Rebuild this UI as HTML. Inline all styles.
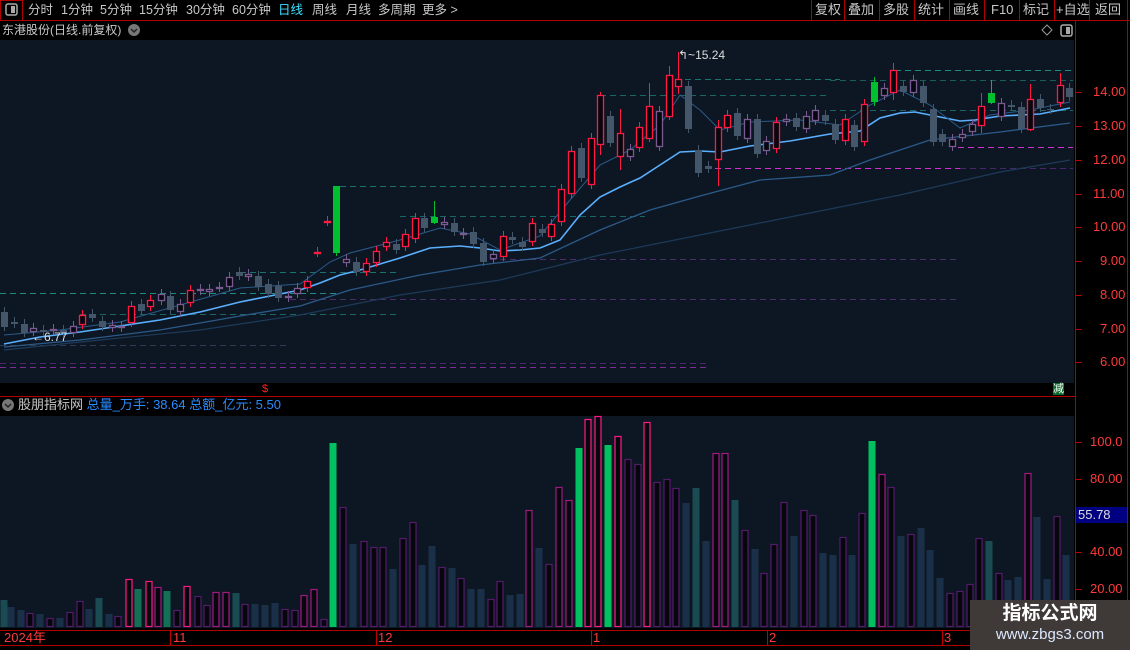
<!DOCTYPE html>
<html><head><meta charset="utf-8">
<style>
*{margin:0;padding:0;box-sizing:border-box}
body{width:1130px;height:650px;background:#000;overflow:hidden;position:relative;font-family:"Liberation Sans","Noto Sans CJK SC",sans-serif;color:#c8c8c8}
.t{position:absolute;white-space:nowrap;font-size:13px;line-height:16px}
.ax{position:absolute;color:#ff3a3a;font-size:13px;font-family:"Liberation Sans",sans-serif;line-height:14px}
</style></head><body>
<svg id="s" width="1130" height="650" style="position:absolute;left:0;top:0">
<rect x="0" y="40" width="1074" height="343" fill="#0d1724"/>
<rect x="0" y="416" width="1074" height="212" fill="#0d1724"/>
<line x1="0" y1="20.5" x2="1130" y2="20.5" stroke="#b00000"/>
<rect x="0.5" y="0.5" width="22" height="20" fill="none" stroke="#b00000"/>
<rect x="6" y="4" width="11" height="11" rx="2" fill="none" stroke="#aaa" stroke-width="1.5"/><rect x="11" y="6" width="4" height="7" fill="#aaa"/>
<g stroke="#b00000"><line x1="811.5" y1="0" x2="811.5" y2="20"/><line x1="844.5" y1="0" x2="844.5" y2="20"/><line x1="879.5" y1="0" x2="879.5" y2="20"/><line x1="914.5" y1="0" x2="914.5" y2="20"/><line x1="949.5" y1="0" x2="949.5" y2="20"/><line x1="984.5" y1="0" x2="984.5" y2="20"/><line x1="1019.5" y1="0" x2="1019.5" y2="20"/><line x1="1054.5" y1="0" x2="1054.5" y2="20"/><line x1="1089.5" y1="0" x2="1089.5" y2="20"/><line x1="1127.5" y1="0" x2="1127.5" y2="650"/>
<line x1="1075.5" y1="21" x2="1075.5" y2="650"/>
<line x1="0" y1="396.5" x2="1075" y2="396.5"/>
<line x1="0" y1="630.5" x2="1075" y2="630.5"/>
<line x1="0" y1="645.5" x2="1075" y2="645.5"/></g>
<circle cx="134" cy="30" r="6" fill="#777"/><path d="M131 29l3 3 3-3" stroke="#222" fill="none" stroke-width="1.5"/>
<circle cx="8" cy="405" r="6" fill="#777"/><path d="M5 404l3 3 3-3" stroke="#222" fill="none" stroke-width="1.5"/>
<path d="M1047 25l5 5-5 5-5-5z" fill="none" stroke="#999"/>
<rect x="1061" y="25" width="11" height="11" rx="2" fill="none" stroke="#aaa" stroke-width="1.5"/><rect x="1066" y="27" width="4" height="7" fill="#aaa"/>
<g id="g"></g>
</svg>
<div class="t" style="left:28px;top:2px;font-size:12.5px">分时</div>
<div class="t" style="left:61px;top:2px;font-size:12.5px">1分钟</div>
<div class="t" style="left:100px;top:2px;font-size:12.5px">5分钟</div>
<div class="t" style="left:139px;top:2px;font-size:12.5px">15分钟</div>
<div class="t" style="left:186px;top:2px;font-size:12.5px">30分钟</div>
<div class="t" style="left:232px;top:2px;font-size:12.5px">60分钟</div>
<div class="t" style="left:278px;top:2px;color:#3ce0ff;font-size:12.5px">日线</div>
<div class="t" style="left:312px;top:2px;font-size:12.5px">周线</div>
<div class="t" style="left:346px;top:2px;font-size:12.5px">月线</div>
<div class="t" style="left:378px;top:2px;font-size:12.5px">多周期</div>
<div class="t" style="left:422px;top:2px;font-size:12.5px">更多 &gt;</div>
<div class="t" style="left:815px;top:2px">复权</div>
<div class="t" style="left:848px;top:2px">叠加</div>
<div class="t" style="left:883px;top:2px">多股</div>
<div class="t" style="left:918px;top:2px">统计</div>
<div class="t" style="left:953px;top:2px">画线</div>
<div class="t" style="left:991px;top:2px">F10</div>
<div class="t" style="left:1023px;top:2px">标记</div>
<div class="t" style="left:1056px;top:2px">+自选</div>
<div class="t" style="left:1095px;top:2px">返回</div>
<div class="t" style="left:2px;top:22px;font-size:12px">东港股份(日线.前复权)</div>
<div class="t" style="left:18px;top:397px">股朋指标网 <span style="color:#2a8cff">总量_万手: 38.64 总额_亿元: 5.50</span></div>
<div class="t" style="left:32px;top:329px;font-size:12px;color:#ddd">&larr;6.77</div>
<div class="t" style="left:678px;top:47px;font-size:12px;color:#ddd">&#8624;~15.24</div>
<div class="t" style="left:262px;top:383px;color:#ff2020;font-size:11px;line-height:12px">$</div>
<div class="t" style="left:1053px;top:383px;background:#0a6a2a;color:#fff;font-size:11px;line-height:12px">减</div>
<div class="ax" style="left:1093px;top:85px">14.00</div>
<div class="ax" style="left:1093px;top:119px">13.00</div>
<div class="ax" style="left:1093px;top:153px">12.00</div>
<div class="ax" style="left:1093px;top:187px">11.00</div>
<div class="ax" style="left:1093px;top:220px">10.00</div>
<div class="ax" style="left:1100px;top:254px">9.00</div>
<div class="ax" style="left:1100px;top:288px">8.00</div>
<div class="ax" style="left:1100px;top:322px">7.00</div>
<div class="ax" style="left:1100px;top:355px">6.00</div>
<div class="ax" style="left:1090px;top:435px">100.0</div>
<div class="ax" style="left:1090px;top:472px">80.00</div>
<div class="ax" style="left:1090px;top:545px">40.00</div>
<div class="ax" style="left:1090px;top:582px">20.00</div>
<div class="ax" style="left:1076px;top:507px;width:51px;height:16px;background:#000080;color:#ddd;line-height:16px;padding-left:2px">55.78</div>
<div class="ax" style="left:4px;top:631px">2024年</div>
<div class="ax" style="left:173px;top:631px">11</div>
<div class="ax" style="left:378px;top:631px">12</div>
<div class="ax" style="left:593px;top:631px">1</div>
<div class="ax" style="left:769px;top:631px">2</div>
<div class="ax" style="left:944px;top:631px">3</div>
<div style="position:absolute;left:970px;top:600px;width:160px;height:50px;background:#3f3a38"></div>
<div class="t" style="left:970px;top:603px;width:160px;text-align:center;color:#fff;font-size:19px;line-height:22px;font-weight:bold">指标公式网</div>
<div class="t" style="left:970px;top:626px;width:160px;text-align:center;color:#dde8ff;font-size:15px;line-height:18px">www.zbgs3.com</div>
<script>
var NS="http://www.w3.org/2000/svg",g=document.getElementById('g');
function el(t,a){var e=document.createElementNS(NS,t);for(var k in a)e.setAttribute(k,a[k]);g.appendChild(e);return e;}
function dl(y,x1,x2,c,o){el('line',{x1:x1,x2:x2,y1:y+.5,y2:y+.5,stroke:c,'stroke-dasharray':'6,4','stroke-opacity':o||1});}
dl(293,0,340,'#1f8a80');dl(272,240,400,'#1f8a80',.8);dl(314,80,400,'#1f8a80',.7);dl(186,340,560,'#1f8a80',.8);
dl(216,400,645,'#1f8a80',.7);dl(95,600,830,'#1f8a80',.7);dl(79,685,840,'#1f8a80',.8);dl(70,895,1073,'#1f8a80');
dl(80,830,1073,'#1f8a80',.6);dl(110,830,1073,'#1f8a80',.7);dl(345,0,290,'#303a50');
dl(168,715,960,'#d030d0');dl(168,960,1073,'#7030a0',.6);dl(147,958,1073,'#d030d0');
dl(299,290,960,'#7a3a9a',.6);dl(259,480,960,'#7a3a9a',.6);dl(363,0,710,'#6a2a8a',.7);dl(367,0,710,'#a030b0',.8);
function pl(pts,c,w,o){el('polyline',{points:pts,fill:'none',stroke:c,'stroke-width':w,'stroke-opacity':o||1});}
pl("4,350 100,340 200,330 300,315 400,295 500,280 600,255 700,235 800,215 900,195 1000,172 1070,160",'#1e3a58',1.2);
pl("4,347 80,340 160,330 240,316 300,306 350,290 420,275 480,265 540,258 600,230 650,210 700,196 760,180 830,175 870,160 930,140 1000,132 1070,123",'#2c5a88',1.3);
pl("4,344 40,337 80,332 120,326 160,320 200,312 240,302 270,296 300,290 320,283 340,275 360,270 400,258 430,248 460,246 480,248 500,251 520,250 540,248 560,240 580,215 600,197 620,187 640,178 660,165 680,152 700,151 720,152 750,146 790,141 830,134 860,131 880,118 900,113 915,112 945,118 960,121 975,120 1000,116 1040,114 1060,110 1070,108",'#5ab0ff',1.6);
pl("4,335 60,330 120,322 180,305 240,288 300,284 330,262 350,253 400,240 440,228 470,234 500,250 540,236 570,200 600,165 630,150 660,125 680,95 700,110 720,130 750,122 800,120 840,125 870,105 900,90 930,105 960,128 990,115 1030,110 1070,102",'#2c5a88',1);
var C=[[4,312,327,'s'],[14,322,324,'s'],[24,324,333,'s'],[33,328,332,'p'],[43,330,332,'s'],[53,329,331,'p'],[63,330,333,'s'],[73,326,333,'p'],[82,315,325,'r'],[92,314,318,'s'],[102,321,327,'s'],[112,325,328,'p'],[121,326,328,'p'],[131,306,323,'r'],[141,304,311,'s'],[150,300,307,'r'],[161,294,301,'p'],[170,296,310,'s'],[180,304,312,'p'],[190,290,303,'r'],[200,289,291,'p'],[209,289,292,'p'],[219,287,288,'p'],[229,277,287,'p'],[239,272,276,'s'],[248,274,277,'p'],[258,276,287,'s'],[268,284,294,'s'],[278,286,298,'s'],[288,296,298,'p'],[297,288,294,'p'],[307,281,288,'r'],[317,252,253,'r'],[327,221,222,'r'],[336,186,253,'g'],[346,259,263,'p'],[356,262,272,'s'],[366,263,272,'r'],[376,251,263,'r'],[386,242,247,'r'],[396,244,250,'s'],
[405,234,247,'r'],[415,218,239,'r'],[424,218,228,'s'],[434,217,223,'g'],[444,222,225,'p'],[454,223,232,'s'],[463,233,235,'p'],[473,232,244,'s'],[483,243,262,'s'],[493,254,259,'p'],[503,236,257,'r'],[512,237,240,'s'],[522,242,247,'s'],[532,223,242,'r'],[542,229,233,'s'],[551,224,237,'r'],[561,189,222,'r'],[571,151,194,'r'],[581,148,178,'s'],[591,138,185,'r'],[600,95,145,'r'],[610,116,143,'s'],[620,133,157,'r'],[630,149,157,'p'],[639,127,148,'r'],[649,106,139,'r'],[659,111,147,'p'],[669,75,117,'r'],[678,79,87,'r'],[688,86,129,'s'],[698,150,173,'s'],[708,166,169,'s'],[718,127,160,'r'],[727,115,128,'r'],[737,113,136,'s'],[747,119,139,'p'],[757,119,154,'s'],[766,141,151,'p'],[776,122,149,'r'],[786,119,122,'p'],[796,118,127,'s'],[806,116,129,'p'],[815,110,121,'p'],[825,115,121,'s'],
[835,124,140,'s'],[845,119,141,'r'],[854,125,147,'s'],[864,104,142,'r'],[874,82,102,'g'],[884,88,96,'p'],[893,70,93,'r'],[903,86,92,'s'],[913,80,93,'p'],[923,86,103,'s'],[933,109,142,'s'],[942,134,142,'s'],[952,139,147,'p'],[962,134,138,'p'],[972,124,132,'p'],[981,106,126,'r'],[991,93,103,'g'],[1001,103,117,'p'],[1011,105,107,'s'],[1021,107,129,'s'],[1030,99,130,'r'],[1040,99,108,'s'],[1050,109,110,'s'],[1060,85,103,'r'],[1069,88,97,'s']];
var col={r:'#ff1a44',s:'#44566a',p:'#7a5a90',g:'#00c030'};
var wk={678:[52,94],669:[66,120],718:[120,186],600:[92,155],620:[109,170],649:[83,142],893:[63,100],1060:[73,107],1030:[84,131],981:[93,133],991:[80,104],434:[201,224],336:[186,256]};
C.forEach(function(c){var x=c[0],t=c[1],b=c[2],k=c[3],w=wk[x]||[t-5,b+4];var cl=col[k];
el('line',{x1:x+.5,x2:x+.5,y1:w[0],y2:w[1],stroke:cl});
if(k=='s'||k=='g')el('rect',{x:x-3,y:t,width:7,height:Math.max(b-t,1),fill:cl});
else el('rect',{x:x-2.5,y:t+.5,width:6,height:Math.max(b-t-1,1),fill:'#05080e',stroke:cl,'stroke-width':1.3});});
var V=[[4,600,'t'],[11,607,'s'],[21,610,'s'],[30,613,'p'],[40,614,'s'],[50,618,'p'],[60,618,'s'],[70,612,'p'],[80,601,'p'],[89,609,'s'],[99,598,'t'],[109,614,'s'],[118,616,'p'],[129,579,'k'],[138,589,'gt'],[149,581,'k'],[158,587,'m'],[167,591,'gt'],[177,610,'p'],[187,586,'k'],[198,596,'p'],[207,605,'p'],[216,592,'m'],[226,592,'m'],[236,593,'t'],[245,604,'p'],[255,604,'s'],[265,605,'s'],[275,603,'s'],[285,609,'p'],[295,610,'p'],[304,595,'m'],[314,589,'m'],[324,619,'p'],[333,443,'g'],[343,507,'p'],[353,544,'s'],[364,541,'p'],[374,547,'p'],[383,547,'p'],[393,569,'s'],[403,538,'p'],[413,522,'p'],[422,565,'s'],[432,546,'s'],[442,567,'p'],[452,568,'s'],[461,578,'p'],[471,589,'s'],[481,589,'s'],[491,599,'p'],[500,581,'p'],[510,595,'s'],[520,594,'s'],[529,510,'m'],[539,548,'s'],[549,564,'p'],[559,487,'m'],[569,500,'m'],[579,448,'g'],[588,419,'k'],[598,416,'k'],[608,445,'g'],[618,436,'k'],[628,459,'p'],[638,464,'p'],[647,422,'k'],[657,482,'p'],[667,479,'p'],[676,488,'p'],[686,503,'s'],[696,488,'t'],[706,541,'s'],[716,453,'m'],[725,453,'m'],[735,500,'t'],[745,530,'p'],[755,549,'s'],[764,573,'p'],[774,544,'p'],[784,502,'p'],[794,536,'s'],[804,510,'p'],[813,515,'p'],[823,553,'s'],[833,555,'s'],[843,537,'p'],[852,555,'s'],[862,513,'p'],[872,441,'g'],[882,474,'m'],[891,487,'p'],[901,536,'s'],[911,534,'p'],[921,528,'s'],[930,550,'s'],[940,578,'s'],[950,593,'p'],[960,591,'p'],[970,584,'p'],[979,538,'p'],[989,541,'t'],[999,573,'p'],[1008,580,'s'],[1018,577,'s'],[1028,473,'m'],[1037,517,'s'],[1047,579,'s'],[1057,516,'p'],[1066,555,'s']];
var vc={t:'#1a4a52',s:'#1a3048',gt:'#137055',g:'#00c060',p:'#551a6a',k:'#ff1a88',m:'#a01a80'};
V.forEach(function(v){var x=v[0],t=v[1],k=v[2],cl=vc[k];
if(k=='t'||k=='s'||k=='g'||k=='gt')el('rect',{x:x-3.5,y:t,width:7,height:627-t,fill:cl});
else el('rect',{x:x-3,y:t+.5,width:6,height:626-t,fill:'#05070c',stroke:cl,'stroke-width':1.2});});
[92,126,160,194,227,261,295,329,362,442,479,515,552,589].forEach(function(y){el('line',{x1:1076,x2:1082,y1:y+.5,y2:y+.5,stroke:'#c00000'});});
[170,376,591,767,942].forEach(function(x){el('line',{x1:x+.5,x2:x+.5,y1:630,y2:645,stroke:'#c00000'});});
</script>
</body></html>
